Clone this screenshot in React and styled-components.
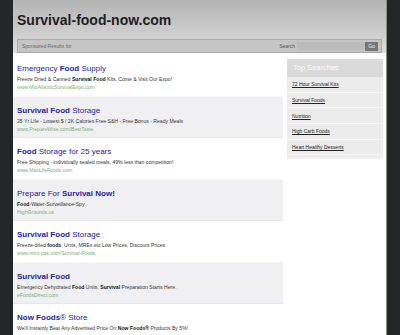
import React from 'react'
import styled, { createGlobalStyle } from 'styled-components'

const GlobalStyle = createGlobalStyle`
    html, body {
        margin: 0;
        padding: 0;
        background: #25262a;
        font-family: "Liberation Sans", Arial, sans-serif;
    }
`

const ads = [
    { title: [['Emergency ', 0], ['Food', 1], [' Supply', 0]], desc: [['Freeze Dried & Canned ', 0], ['Survival Food', 1], [' Kits. Come & Visit Our Expo!', 0]], url: 'www.MidAtlanticSurvivalExpo.com' },
    { title: [['Survival Food', 1], [' Storage', 0]], desc: [['25 Yr Life - Lowest $ / 2K Calories Free S&H - Free Bonus - Ready Meals', 0]], url: 'www.PrepareWise.com/BestTaste' },
    { title: [['Food', 1], [' Storage for 25 years', 0]], desc: [['Free Shipping - individually sealed meals, 49% less than competition!', 0]], url: 'www.MaxLifeFoods.com' },
    { title: [['Prepare For ', 0], ['Survival Now!', 1]], desc: [['Food', 1], ['-Water-Surveillance-Spy', 0]], url: 'HighGrounds.us' },
    { title: [['Survival Food', 1], [' Storage', 0]], desc: [['Freeze-dried ', 0], ['foods', 1], [', Units, MREs etc Low Prices, Discount Prices', 0]], url: 'www.nitro-pak.com/Survival-Foods' },
    { title: [['Survival Food', 1]], desc: [['Emergency Dehydrated ', 0], ['Food', 1], [' Units. ', 0], ['Survival', 1], [' Preparation Starts Here.', 0]], url: 'eFoodsDirect.com' },
    // last one is cut by the window, url not visible
    { title: [['Now Foods', 1], ['® Store', 0]], desc: [['We\'ll Instantly Beat Any Advertised Price On ', 0], ['Now Foods®', 1], [' Products By 5%!', 0]] },
]

const searches = ['72 Hour Survival Kits', 'Survival Foods', 'Nutrition', 'High Carb Foods', 'Heart Healthy Desserts']

function Parts({ parts }) {
    return parts.map(([text, bold], i) => bold ? <b key={i}>{text}</b> : <span key={i}>{text}</span>)
}

export default function App() {
    return (
        <>
            <GlobalStyle />
            <Page>
                <Header>
                    <SiteTitle>Survival-food-now.com</SiteTitle>
                    <SearchBar>
                        <Sponsored>Sponsored Results for</Sponsored>
                        <SearchLabel>Search</SearchLabel>
                        <SearchInput />
                        <GoButton>Go</GoButton>
                    </SearchBar>
                </Header>
                <Body>
                    <Results>
                        {ads.map((ad, i) => (
                            <Ad key={i} shaded={i % 2 === 1}>
                                <AdTitle><Parts parts={ad.title} /></AdTitle>
                                <AdDesc><Parts parts={ad.desc} /></AdDesc>
                                {ad.url && <AdUrl>{ad.url}</AdUrl>}
                            </Ad>
                        ))}
                    </Results>
                    <Sidebar>
                        <SideHead>Top Searches</SideHead>
                        {searches.map((s) => (
                            <SideItem key={s}><SideLink>{s}</SideLink></SideItem>
                        ))}
                    </Sidebar>
                </Body>
            </Page>
        </>
    )
}

const Page = styled.div`
    width: 373px;
    margin-left: 13px;
    height: 335px;
    overflow: hidden;
    border-right: 1px solid #8c8c8c;
    background: linear-gradient(#ececec, #ffffff 40px);
    display: flex;
    flex-direction: column;
`

const Header = styled.div`
    height: 57px;
    box-sizing: border-box;
    padding: 13px 4px 0 4px;
    background: linear-gradient(#b4b4b4, #dddddd);
`

const SiteTitle = styled.h1`
    margin: 0;
    font-size: 14px;
    line-height: 15px;
    font-weight: bold;
    color: #1e1e1e;
`

const SearchBar = styled.div`
    margin-top: 11px;
    height: 14px;
    box-sizing: border-box;
    background: #c5c5c5;
    border: 1px solid #a9a9a9;
    display: flex;
    align-items: center;
    padding: 0 3px 0 4px;
`

const Sponsored = styled.span`
    flex: 1;
    font-size: 5px;
    color: #6a6a6a;
`

const SearchLabel = styled.span`
    font-size: 5px;
    color: #555;
    margin-right: 2px;
`

const SearchInput = styled.div`
    width: 68px;
    height: 8px;
    background: #bcbcbc;
`

const GoButton = styled.div`
    width: 13px;
    height: 9px;
    background: #777;
    color: #eee;
    font-size: 5px;
    display: grid;
    place-items: center;
`

const Body = styled.div`
    display: flex;
    padding-top: 2px;
`

const Results = styled.div`
    width: 270px;
`

const Ad = styled.div`
    height: 41.5px;
    box-sizing: border-box;
    padding: 9px 4px 0 4px;
    background: ${(p) => (p.shaded ? '#f0f0f2' : 'transparent')};
    border-bottom: 1px solid ${(p) => (p.shaded ? '#e8e8ea' : '#f6f6f6')};
`

const AdTitle = styled.div`
    font-size: 8px;
    line-height: 9px;
    color: #2323a8;
    white-space: nowrap;
    margin-bottom: 2px;
`

const AdDesc = styled.div`
    font-size: 5.1px;
    line-height: 8px;
    color: #333;
    white-space: nowrap;
    b { color: #111; }
`

const AdUrl = styled.div`
    font-size: 5.1px;
    line-height: 8px;
    color: #78b078;
    white-space: nowrap;
`

const Sidebar = styled.div`
    width: 96px;
    margin: 4px 0 0 4px;
    background: #ececec;
    align-self: flex-start;
    padding-bottom: 3px;
    border-bottom: 1px solid #f4f4f4;
`

const SideHead = styled.div`
    height: 18px;
    background: #dadada;
    color: #fafafa;
    font-size: 7.5px;
    line-height: 18px;
    padding-left: 6px;
`

const SideItem = styled.div`
    height: 15.7px;
    box-sizing: border-box;
    border-bottom: 1px solid #f6f6f6;
    display: flex;
    align-items: center;
    padding-left: 5px;
`

const SideLink = styled.span`
    font-size: 5px;
    color: #222;
    text-decoration: underline;
`
